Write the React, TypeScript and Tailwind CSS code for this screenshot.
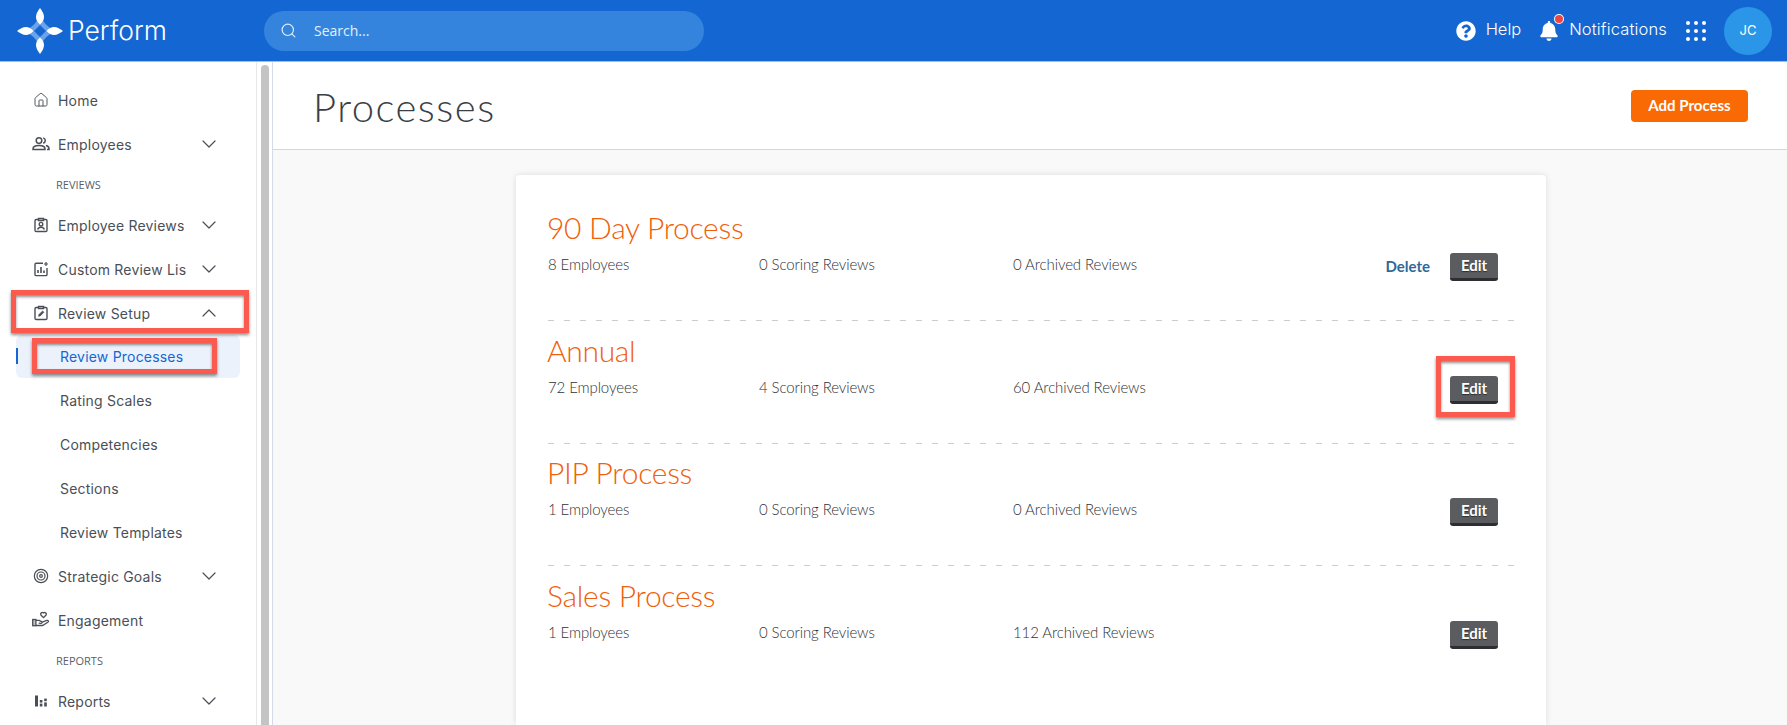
import React from 'react';
import { House, ChevronDown, ChevronUp, Search, Target } from 'lucide-react';
import { FaQuestionCircle, FaBell } from 'react-icons/fa';

const sans = "font-['Inter','Noto_Sans',sans-serif]";
const iconCls = 'w-[16px] h-[16px] text-[#4a4f57]';

function EmployeesIcon() {
  return (
    <svg viewBox="0 0 18 16" className="w-[18px] h-[16px] -ml-[1px] text-[#4a4f57]" fill="none" stroke="currentColor" strokeWidth="1.5">
      <circle cx="7" cy="4.6" r="2.8" />
      <path d="M1 13.6v-.8c0-2.3 2.6-3.4 6-3.4s6 1.1 6 3.4v.8z" />
      <path d="M11.2 1.9a2.8 2.8 0 0 1 0 5.4M14 9.6c1.9.5 3 1.6 3 3.2v.8h-2" />
    </svg>
  );
}

function ReviewsIcon() {
  return (
    <svg viewBox="0 0 16 16" className={iconCls} fill="none" stroke="currentColor" strokeWidth="1.4">
      <rect x="2" y="2.5" width="12" height="12" rx="1.2" />
      <path d="M5.5 1.5h5v2h-5z" fill="white" />
      <circle cx="8" cy="7.2" r="1.8" />
      <path d="M4.6 12.6c.6-1.7 1.8-2.4 3.4-2.4s2.8.7 3.4 2.4" />
    </svg>
  );
}

function CustomListIcon() {
  return (
    <svg viewBox="0 0 16 16" className={iconCls} fill="none" stroke="currentColor" strokeWidth="1.4">
      <path d="M10 2.2H3.2A1.2 1.2 0 0 0 2 3.4v10a1.2 1.2 0 0 0 1.2 1.2h9.6a1.2 1.2 0 0 0 1.2-1.2V7" />
      <path d="M5 12V9M8 12V6M11 12V9.5" strokeWidth="1.6" />
      <path d="M13 1v4M11 3h4" strokeWidth="1.2" />
    </svg>
  );
}

function SetupIcon() {
  return (
    <svg viewBox="0 0 16 16" className={iconCls} fill="none" stroke="currentColor" strokeWidth="1.4">
      <rect x="2" y="2.5" width="12" height="12" rx="1.2" />
      <path d="M5.5 1.5h5v2h-5z" fill="white" />
      <path d="M5.5 11.3l.4-1.8 3.7-3.6 1.3 1.4-3.6 3.6z" fill="currentColor" strokeWidth="0.6" />
    </svg>
  );
}

function EngagementIcon() {
  return (
    <svg viewBox="0 0 18 18" className="w-[18px] h-[18px] -ml-[1px] -mt-[2px] text-[#4a4f57]" fill="none" stroke="currentColor" strokeWidth="1.3">
      <path d="M11.5 7.6 8.9 5a1.7 1.7 0 0 1 2.6-2.1 1.7 1.7 0 0 1 2.6 2.1z" />
      <rect x="0.7" y="9.5" width="3.2" height="6.2" fill="currentColor" fillOpacity="0.35" />
      <path d="M3.9 10.4h3.3l2.4 1.2c1 .5.6 1.8-.5 1.7l-2.4-.2M9.6 12.3l5.2-1.9c1.4-.4 2.3 1 1 1.9l-5.2 3.2H3.9" />
    </svg>
  );
}

function ReportsIcon() {
  return (
    <svg viewBox="0 0 16 16" className={iconCls} fill="currentColor">
      <rect x="2" y="2.5" width="3" height="11" />
      <rect x="6.8" y="7" width="2.6" height="2.6" />
      <rect x="6.8" y="10.6" width="2.6" height="2.9" />
      <rect x="11.2" y="5.6" width="2.6" height="2.6" />
      <rect x="11.2" y="9.4" width="2.6" height="4.1" />
    </svg>
  );
}

function Logo() {
  return (
    <svg viewBox="0 0 46 46" className="w-[46px] h-[46px]">
      <path d="M23 6 C25 14 32 21 40 23 C32 25 25 32 23 40 C21 32 14 25 6 23 C14 21 21 14 23 6 Z" fill="#6aa3e8" />
      <path d="M23 17 L29 23 L23 29 L17 23 Z" fill="#1467d2" />
      <path d="M23 0 C27 5 29.5 11 23 16.5 C16.5 11 19 5 23 0 Z" fill="white" />
      <path d="M23 46 C27 41 29.5 35 23 29.5 C16.5 35 19 41 23 46 Z" fill="white" />
      <path d="M0 23 C5 19 11 16.5 16.5 23 C11 29.5 5 27 0 23 Z" fill="white" />
      <path d="M46 23 C41 19 35 16.5 29.5 23 C35 29.5 41 27 46 23 Z" fill="white" />
    </svg>
  );
}

function NavRow({ icon, label, chevron }: { icon: React.ReactNode; label: string; chevron?: 'up' | 'down' }) {
  return (
    <div className="h-[44px] flex items-center pl-[33px] pr-[35px] text-[14px] tracking-[0.2px] text-[#4a4f57]">
      <span className="w-[25px] shrink-0 flex">{icon}</span>
      <span className="flex-1 whitespace-nowrap overflow-hidden">{label}</span>
      {chevron === 'down' && <ChevronDown size={24} strokeWidth={1.2} className="shrink-0" />}
      {chevron === 'up' && <ChevronUp size={24} strokeWidth={1.2} className="shrink-0" />}
    </div>
  );
}

function SubRow({ label }: { label: string }) {
  return <div className="h-[44px] flex items-center pl-[60px] text-[14px] tracking-[0.2px] text-[#4a4f57]">{label}</div>;
}

function SectionLabel({ label }: { label: string }) {
  return <div className="h-[37px] flex items-center pt-[2px] pl-[56px] text-[11px] text-[#5a5f66] font-['Open_Sans',sans-serif]">{label}</div>;
}

function EditBtn() {
  return (
    <button className="mt-[1px] w-[48px] h-[28px] bg-[#5b5c60] border-b-[3px] border-[#2e2e30] rounded-[3px] text-white text-[15px] font-bold font-['Lato',sans-serif] [text-shadow:0_1px_1px_rgba(0,0,0,0.5)]">
      Edit
    </button>
  );
}

const processes = [
  { name: '90 Day Process', employees: '8 Employees', scoring: '0 Scoring Reviews', archived: '0 Archived Reviews', canDelete: true, rowCls: 'h-[123px]' },
  { name: 'Annual', employees: '72 Employees', scoring: '4 Scoring Reviews', archived: '60 Archived Reviews', rowCls: 'h-[122px]' },
  { name: 'PIP Process', employees: '1 Employees', scoring: '0 Scoring Reviews', archived: '0 Archived Reviews', rowCls: 'h-[123px]' },
  { name: 'Sales Process', employees: '1 Employees', scoring: '0 Scoring Reviews', archived: '112 Archived Reviews', rowCls: 'h-[123px]' },
];

export default function App() {
  return (
    <div className={`relative w-[1787px] h-[725px] overflow-hidden bg-white flex flex-col ${sans}`}>
      {/* Top bar */}
      <header className="h-[62px] shrink-0 bg-[#1467d2] border-b border-[#a9bdd6] flex items-center pl-[17px] pr-[15px] text-white">
        <Logo />
        <span className="ml-[5px] w-[196px] text-[26.5px] font-light">Perform</span>
        <div className="w-[440px] h-[40px] rounded-full bg-[#3484dd] flex items-center pl-[16px] text-[14px] text-[#e4effb] font-['Open_Sans',sans-serif]">
          <Search size={17} strokeWidth={1.6} />
          <span className="ml-[17px]">Search...</span>
        </div>
        <div className="ml-auto flex items-center">
          <FaQuestionCircle size={20} />
          <span className="ml-[10px] -mt-[2px] text-[16.5px] font-light">Help</span>
          <span className="relative ml-[18px] flex">
            <FaBell size={20} />
            <span className="absolute -top-[6px] -right-[4px] w-[8px] h-[8px] rounded-full bg-[#ef4444] ring-1 ring-white" />
          </span>
          <span className="ml-[10px] -mt-[2px] text-[16.5px] tracking-[0.15px] font-light">Notifications</span>
          <div className="ml-[19px] grid grid-cols-3 gap-[4px]">
            {[0, 1, 2, 3, 4, 5, 6, 7, 8].map((i) => (
              <span key={i} className="w-[4px] h-[4px] rounded-full bg-white" />
            ))}
          </div>
          <div className="ml-[18px] w-[48px] h-[48px] rounded-full bg-[#2b96e8] flex items-center justify-center text-[13px]">JC</div>
        </div>
      </header>

      <div className="flex-1 flex min-h-0">
        {/* Sidebar */}
        <aside className="w-[257px] shrink-0 pt-[16px] border-r border-[#e8e8e8]">
          <NavRow icon={<House size={16} strokeWidth={1.4} className="text-[#4a4f57]" />} label="Home" />
          <NavRow icon={<EmployeesIcon />} label="Employees" chevron="down" />
          <SectionLabel label="REVIEWS" />
          <NavRow icon={<ReviewsIcon />} label="Employee Reviews" chevron="down" />
          <NavRow icon={<CustomListIcon />} label="Custom Review Lis" chevron="down" />
          <NavRow icon={<SetupIcon />} label="Review Setup" chevron="up" />
          <div className="relative ml-[16px] mr-[16px] h-[43px] rounded-[6px] bg-[#ecf2fb] flex items-center pl-[44px] text-[14px] tracking-[0.2px] text-[#1467d2]">
            <span className="absolute left-0 top-[13px] w-[2px] h-[16px] bg-[#1467d2]" />
            Review Processes
          </div>
          <SubRow label="Rating Scales" />
          <SubRow label="Competencies" />
          <SubRow label="Sections" />
          <SubRow label="Review Templates" />
          <NavRow icon={<Target size={16} strokeWidth={1.8} className="text-[#4a4f57]" />} label="Strategic Goals" chevron="down" />
          <NavRow icon={<EngagementIcon />} label="Engagement" />
          <SectionLabel label="REPORTS" />
          <NavRow icon={<ReportsIcon />} label="Reports" chevron="down" />
        </aside>

        {/* Scrollbar */}
        <div className="w-[16px] shrink-0 pl-[4px] pr-[3px] pt-[3px] border-r border-[#d5dbe6] bg-white">
          <div className="w-[8px] h-full rounded-t-full bg-[#c4c4c4]" />
        </div>

        {/* Main */}
        <main className="flex-1 min-w-0 bg-[#f9f9f9] flex flex-col">
          <div className="h-[88px] shrink-0 bg-white border-b border-[#d4d6da] flex items-center justify-between pl-[40px] pr-[39px]">
            <h1 className="mt-[2px] text-[40px] tracking-[1.5px] font-light text-[#3b3f45] font-['Lato',sans-serif]">Processes</h1>
            <button className="w-[117px] h-[32px] rounded-[4px] bg-[#f96a05] text-white text-[15px] font-bold font-['Lato',sans-serif]">Add Process</button>
          </div>

          <section className="ml-[243px] mt-[25px] w-[1030px] flex-1 bg-white rounded-t-[4px] shadow-[0_0_6px_rgba(0,0,0,0.12)] px-[32px] pt-[22px]">
            {processes.map((p, i) => (
              <div key={p.name} className={`${p.rowCls} pt-[10px]`}>
                <h2 className="-ml-[1px] h-[40px] text-[30px] leading-[40px] tracking-[-0.3px] font-light text-[#f0600a] font-['Lato',sans-serif]">{p.name}</h2>
                <div className="mt-[5px] h-[28px] flex text-[15px] leading-[24px] tracking-[-0.1px] font-light text-[#2f3236] font-['Lato',sans-serif]">
                  <span className="w-[211px]">{p.employees}</span>
                  <span className="w-[254px]">{p.scoring}</span>
                  <span>{p.archived}</span>
                  <div className="ml-auto mr-[16px] flex items-center">
                    {p.canDelete && <span className="mr-[20px] text-[15px] tracking-normal font-bold text-[#2d6a99]">Delete</span>}
                    <EditBtn />
                  </div>
                </div>
                {i < 3 && (
                  <div className="mt-[40px] h-px bg-[repeating-linear-gradient(90deg,#cccccc_0,#cccccc_6px,transparent_6px,transparent_16px)]" />
                )}
              </div>
            ))}
          </section>
        </main>
      </div>

      {/* Annotation boxes drawn over the screenshot */}
      <div className="absolute left-[11px] top-[290px] w-[238px] h-[43px] border-[5px] border-[#fb5a4f] shadow-[0_2px_3px_rgba(0,0,0,0.45),inset_0_2px_3px_rgba(0,0,0,0.45)]" />
      <div className="absolute left-[32px] top-[338px] w-[185px] h-[36px] border-[5px] border-[#fb5a4f] shadow-[0_2px_3px_rgba(0,0,0,0.45),inset_0_2px_3px_rgba(0,0,0,0.45)]" />
      <div className="absolute left-[1436px] top-[356px] w-[79px] h-[61px] border-[5px] border-[#fb5a4f] shadow-[0_2px_3px_rgba(0,0,0,0.45),inset_0_2px_3px_rgba(0,0,0,0.45)]" />
    </div>
  );
}
